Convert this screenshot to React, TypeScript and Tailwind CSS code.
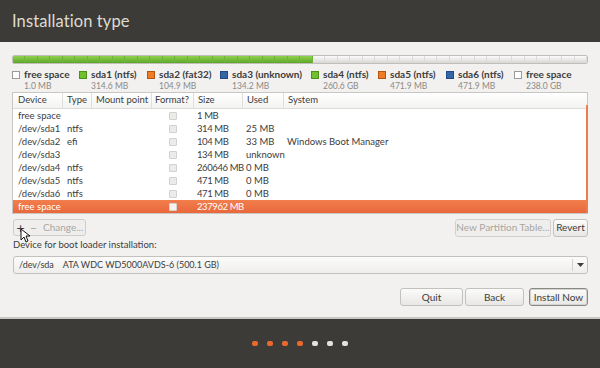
import React from 'react';

const legend = [
  { name: 'free space', size: '1.0 MB', box: 'bg-white border-[#9a9a9a]', w: 'w-[67px]' },
  { name: 'sda1 (ntfs)', size: '314.6 MB', box: 'bg-[#6fc22d] border-[#4e8f1c]', w: 'w-[68px]' },
  { name: 'sda2 (fat32)', size: '104.9 MB', box: 'bg-[#f07c24] border-[#b35510]', w: 'w-[73px]' },
  { name: 'sda3 (unknown)', size: '134.2 MB', box: 'bg-[#3465a4] border-[#204a87]', w: 'w-[91px]' },
  { name: 'sda4 (ntfs)', size: '260.6 GB', box: 'bg-[#6fc22d] border-[#4e8f1c]', w: 'w-[67px]' },
  { name: 'sda5 (ntfs)', size: '471.9 MB', box: 'bg-[#f07c24] border-[#b35510]', w: 'w-[68px]' },
  { name: 'sda6 (ntfs)', size: '471.9 MB', box: 'bg-[#3465a4] border-[#204a87]', w: 'w-[68px]' },
  { name: 'free space', size: '238.0 GB', box: 'bg-white border-[#9a9a9a]', w: 'w-[70px]' },
];

const rows = [
  { dev: 'free space', type: '', size: '1 MB', used: '', sys: '' },
  { dev: '/dev/sda1', type: 'ntfs', size: '314 MB', used: '25 MB', sys: '' },
  { dev: '/dev/sda2', type: 'efi', size: '104 MB', used: '33 MB', sys: 'Windows Boot Manager' },
  { dev: '/dev/sda3', type: '', size: '134 MB', used: 'unknown', sys: '' },
  { dev: '/dev/sda4', type: 'ntfs', size: '260646 MB', used: '0 MB', sys: '' },
  { dev: '/dev/sda5', type: 'ntfs', size: '471 MB', used: '0 MB', sys: '' },
  { dev: '/dev/sda6', type: 'ntfs', size: '471 MB', used: '0 MB', sys: '' },
  { dev: 'free space', type: '', size: '237962 MB', used: '', sys: '', selected: true },
];

const cols = [
  { label: 'Device', w: 'w-[50px] pl-[5px]' },
  { label: 'Type', w: 'w-[29px] pl-[4px]' },
  { label: 'Mount point', w: 'w-[60px] pl-[4px]' },
  { label: 'Format?', w: 'w-[42px] pl-[3px]' },
  { label: 'Size', w: 'w-[49px] pl-[4px]' },
  { label: 'Used', w: 'w-[41px] pl-[4px]' },
  { label: 'System', w: 'flex-1 pl-[4px]' },
];

const Btn: React.FC<{ children: React.ReactNode; w: string; strong?: boolean; disabled?: boolean }> = ({
  children,
  w,
  strong,
  disabled,
}) => (
  <div
    className={`${w} h-[18px] flex items-center justify-center whitespace-nowrap rounded-[3px] border text-[10px] ${
      strong ? 'border-[#8a8884] shadow-[inset_0_0_0_1px_#d4d2ce]' : 'border-[#c3c1bd]'
    } ${
      disabled
        ? 'text-[#a8a6a2] bg-[#efeeec] border-[#d3d1cd]'
        : 'text-[#3c3c3c] bg-gradient-to-b from-[#fbfbfa] to-[#e8e7e5]'
    }`}
  >
    {children}
  </div>
);

export default function App() {
  const greenCells = 24;
  const totalCells = 46;
  return (
    <div className="w-[600px] h-[368px] flex flex-col bg-[#f2f1f0] font-['Lato','Open_Sans',sans-serif] text-[#3c3c3c] overflow-hidden">
      {/* Header */}
      <div className="h-[42px] bg-[#3c3b37] flex items-center px-[12px]">
        <h1 className="text-[16.5px] text-[#dfdbd2] tracking-[0.1px]">Installation type</h1>
      </div>

      <div className="flex-1 px-[12px] pt-[13px] relative">
        {/* Partition bar */}
        <div className="h-[9px] flex rounded-[2px] overflow-hidden border border-[#c0bfbc]">
          {Array.from({ length: totalCells }).map((_, i) => (
            <div
              key={i}
              className={`flex-1 border-r ${
                i < greenCells
                  ? 'bg-gradient-to-b from-[#8fd24e] to-[#5ea72a] border-[#6db53a]'
                  : 'bg-gradient-to-b from-[#fbfbfb] to-[#d8d7d5] border-[#dcdbd9]'
              }`}
            />
          ))}
        </div>

        {/* Legend */}
        <div className="flex mt-[5px] h-[22px]">
          {legend.map((l, i) => (
            <div key={i} className={`${l.w} flex items-start`}>
              <div className={`w-[8px] h-[8px] mt-[2px] border shrink-0 ${l.box}`} />
              <div className="ml-[4px] leading-none">
                <div className="text-[10px] font-bold text-[#3c3c3c] whitespace-nowrap">{l.name}</div>
                <div className="text-[8.5px] text-[#8c8a86] mt-[3px] whitespace-nowrap">{l.size}</div>
              </div>
            </div>
          ))}
        </div>

        {/* Table */}
        <div className="mt-[1px] border border-[#c9c7c3] bg-white relative text-[9.5px]">
          <div className="h-[16px] flex items-center bg-gradient-to-b from-white to-[#f3f3f2] border-b border-[#dddbd8]">
            {cols.map((c, i) => (
              <div
                key={i}
                className={`${c.w} h-full flex items-center whitespace-nowrap ${
                  i < cols.length - 1 ? 'border-r border-[#e1dfdc]' : ''
                }`}
              >
                {c.label}
              </div>
            ))}
          </div>
          {rows.map((r, i) => (
            <div
              key={i}
              className={`h-[13px] flex items-center leading-none ${
                r.selected ? 'bg-gradient-to-b from-[#f27e4e] to-[#e8683a] text-white' : ''
              }`}
            >
              <div className="w-[50px] pl-[5px] whitespace-nowrap">{r.dev}</div>
              <div className="w-[29px] pl-[4px] whitespace-nowrap">{r.type}</div>
              <div className="w-[60px]" />
              <div className="w-[42px] flex justify-center">
                <div
                  className={`w-[8px] h-[8px] rounded-[1px] border ${
                    r.selected ? 'border-[#d8d2cf] bg-[#f6f3f1]' : 'border-[#d3d1ce] bg-[#ecebe9]'
                  }`}
                />
              </div>
              <div className="w-[49px] pl-[3px] whitespace-nowrap tracking-[-0.4px]">{r.size}</div>
              <div className="w-[41px] pl-[3px] whitespace-nowrap">{r.used}</div>
              <div className="flex-1 pl-[3px] whitespace-nowrap">{r.sys}</div>
            </div>
          ))}
          {/* scroll indicator */}
          <div className="absolute right-[-1px] top-[12px] bottom-[0px] w-[2px] bg-[#ee7d4c]" />
        </div>

        {/* Partition actions */}
        <div className="mt-[5px] h-[17px] flex items-center">
          <div className="w-[73px] h-[17px] ml-[1px] flex items-center rounded-[3px] border border-[#cfcdc9] bg-[#efeeec] text-[10px]">
            <span className="w-[13px] text-center text-[#3c3c3c] text-[14px] leading-none">+</span>
            <span className="w-[13px] text-center text-[#a8a6a2] text-[12px] leading-none">−</span>
            <span className="text-[#a8a6a2] ml-[3px]">Change...</span>
          </div>
          <div className="flex-1" />
          <Btn w="w-[96px]" disabled>
            New Partition Table...
          </Btn>
          <div className="w-[2px]" />
          <Btn w="w-[35px]">Revert</Btn>
        </div>

        {/* Boot loader */}
        <div className="mt-[3px] text-[9.5px] leading-[12px] ml-[1px]">Device for boot loader installation:</div>
        <div className="mt-[5px] ml-[1px] h-[18px] flex items-center rounded-[3px] border border-[#c3c1bd] bg-gradient-to-b from-[#fbfbfa] to-[#efeeec] text-[9px]">
          <span className="pl-[5px] whitespace-pre">/dev/sda    ATA WDC WD5000AVDS-6 (500.1 GB)</span>
          <div className="flex-1" />
          <div className="w-[1px] h-[12px] bg-[#d2d0cc]" />
          <div className="w-[14px] flex justify-center">
            <svg width="7" height="4" viewBox="0 0 7 4">
              <path d="M0 0h7L3.5 4z" fill="#3c3c3c" />
            </svg>
          </div>
        </div>

        {/* Bottom buttons */}
        <div className="mt-[14px] flex justify-end">
          <Btn w="w-[63px]">Quit</Btn>
          <div className="w-[2px]" />
          <Btn w="w-[59px]">Back</Btn>
          <div className="w-[5px]" />
          <Btn w="w-[59px]" strong>
            Install Now
          </Btn>
        </div>

        {/* mouse cursor */}
        <svg className="absolute left-[20px] top-[186px]" width="11" height="15" viewBox="0 0 11 15">
          <path d="M1 1v11l3-3 2 5 2-1-2-5h4z" fill="#fff" stroke="#111" strokeWidth="1" strokeLinejoin="round" />
        </svg>
      </div>

      {/* Footer */}
      <div className="h-[51px] bg-[#3c3b37] border-t-2 border-[#c9c7c3] flex items-center justify-center gap-[9px]">
        {[0, 1, 2, 3, 4, 5, 6].map((i) => (
          <div
            key={i}
            className={`w-[6px] h-[5px] rounded-[2px] ${i < 4 ? 'bg-[#e8692e]' : 'bg-[#e4e2de]'}`}
          />
        ))}
      </div>
    </div>
  );
}
